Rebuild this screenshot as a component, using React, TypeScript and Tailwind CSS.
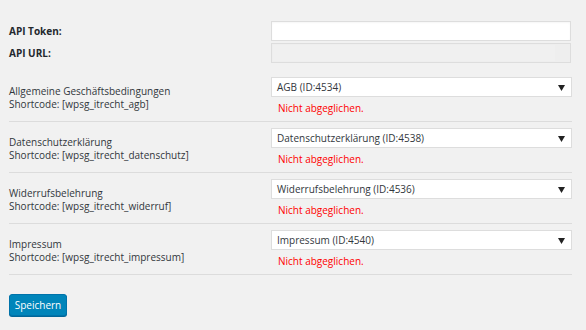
const rows = [
  { label: 'Allgemeine Geschäftsbedingungen', code: '[wpsg_itrecht_agb]', value: 'AGB (ID:4534)' },
  { label: 'Datenschutzerklärung', code: '[wpsg_itrecht_datenschutz]', value: 'Datenschutzerklärung (ID:4538)' },
  { label: 'Widerrufsbelehrung', code: '[wpsg_itrecht_widerruf]', value: 'Widerrufsbelehrung (ID:4536)' },
  { label: 'Impressum', code: '[wpsg_itrecht_impressum]', value: 'Impressum (ID:4540)' },
]

function SelectBox({ value }: { value: string }) {
  return (
    <div className="flex h-[20px] w-[301px] items-center justify-between border border-[#dddddd] bg-white pl-[5px] pr-[6px] text-[10px] leading-none text-[#32373c]">
      <span>{value}</span>
      <svg width="7" height="6" viewBox="0 0 7 6" className="mt-[1px]">
        <path d="M0 0 L7 0 L3.5 6 Z" fill="#222" />
      </svg>
    </div>
  )
}

export default function App() {
  return (
    <div className="min-h-screen bg-[#f1f1f1] font-['Segoe_UI','Open_Sans',sans-serif] text-[#444]">
      <div className="ml-[9px] w-[563px] pt-[21px]">
        {/* API settings */}
        <div className="flex h-[20px] items-center">
          <div className="w-[262px] text-[10px] font-bold text-[#23282d]">API Token:</div>
          <input className="h-[20px] w-[300px] border border-[#dddddd] bg-white shadow-[inset_0_1px_2px_rgba(0,0,0,0.04)] outline-none" />
        </div>
        <div className="mt-[2px] flex h-[20px] items-center">
          <div className="w-[262px] text-[10px] font-bold text-[#23282d]">API URL:</div>
          <div className="flex h-[20px] w-[300px] border border-[#dddddd] bg-[#eeeeee]">
            <div className="m-[1px] w-[282px] bg-[#f0f0f0]" />
          </div>
        </div>

        {/* Legal texts */}
        <div className="mt-[8px]">
          {rows.map((r) => (
            <div key={r.label} className="flex border-b border-[#dcdcdc]">
              <div className="w-[262px] pt-[14px] text-[10px] leading-[13px] text-[#32373c]">
                <div>{r.label}</div>
                <div>Shortcode: {r.code}</div>
              </div>
              <div className="pt-[6px] pb-[6px]">
                <SelectBox value={r.value} />
                <div className="mt-[5px] pl-[7px] text-[10px] leading-[13px] text-[#ff0000]">Nicht abgeglichen.</div>
              </div>
            </div>
          ))}
        </div>

        <button className="mt-[19px] h-[22px] w-[58px] rounded-[3px] border border-[#0073aa] bg-[#0085ba] text-[10px] text-white shadow-[0_1px_0_#006799]">
          Speichern
        </button>
      </div>
    </div>
  )
}
